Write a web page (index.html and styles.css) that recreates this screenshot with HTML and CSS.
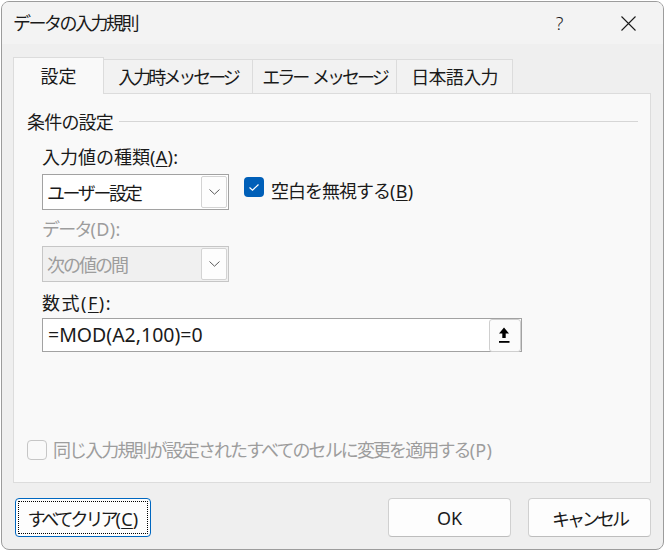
FILE: index.html
```html
<!DOCTYPE html>
<html>
<head>
    <meta charset="utf-8">
    <title>データの入力規則</title>
    <link rel="stylesheet" href="styles.css">
</head>
<body>
    <div class="dialog">
        <div class="titlebar">
            <span class="title">データの入力規則</span>
            <div class="caption-btn help">?</div>
            <div class="caption-btn">
                <svg width="15" height="15" viewBox="0 0 15 15"><path d="M0.5 0.5 L14.5 14.5 M14.5 0.5 L0.5 14.5" stroke="#1a1a1a" stroke-width="1.1" fill="none"/></svg>
            </div>
        </div>

        <div class="content">
            <div class="tabs">
                <div class="tab active">設定</div>
                <div class="tab t-msg">入力時メッセージ</div>
                <div class="tab t-err">エラー メッセージ</div>
                <div class="tab t-ime">日本語入力</div>
            </div>

            <div class="panel">
                <div class="group-title">
                    <span>条件の設定</span>
                    <div class="rule"></div>
                </div>

                <div class="form">
                    <div class="label lbl-type">入力値の種類<span class="key">(<u>A</u>):</span></div>
                    <div class="row">
                        <div class="combo">
                            <span class="combo-text t-user">ユーザー設定</span>
                            <div class="drop-btn">
                                <svg width="11" height="6" viewBox="0 0 11 6"><path d="M0.5 0.5 L5.5 5.2 L10.5 0.5" stroke="#5a5a5a" stroke-width="1" fill="none"/></svg>
                            </div>
                        </div>
                        <div class="check blank">
                            <span class="box checked">
                                <svg width="20" height="20" viewBox="0 0 20 20"><path d="M5.5 10.5 L8.5 13.2 L14.5 7.5" stroke="#fff" stroke-width="1.2" fill="none"/></svg>
                            </span>
                            <span class="check-text">空白を無視する<span class="key">(<u>B</u>)</span></span>
                        </div>
                    </div>

                    <div class="label disabled lbl-data">データ<span class="key">(D):</span></div>
                    <div class="combo disabled">
                        <span class="combo-text t-between">次の値の間</span>
                        <div class="drop-btn">
                            <svg width="11" height="6" viewBox="0 0 11 6"><path d="M0.5 0.5 L5.5 5.2 L10.5 0.5" stroke="#5a5a5a" stroke-width="1" fill="none"/></svg>
                        </div>
                    </div>

                    <div class="label lbl-formula">数式<span class="key">(<u>F</u>):</span></div>
                    <div class="formula">
                        <span class="formula-text">=MOD(A2,100)=0</span>
                        <div class="ref-btn">
                            <svg width="12" height="17" viewBox="0 0 12 17"><path d="M6 0.5 L11 6.5 L7.7 6.5 L7.7 11 L4.3 11 L4.3 6.5 L1 6.5 Z" fill="#000"/><rect x="1" y="14" width="10.5" height="1.8" fill="#000"/></svg>
                        </div>
                    </div>
                </div>

                <div class="check apply disabled">
                    <span class="box"></span>
                    <span class="check-text">同じ入力規則が設定されたすべてのセルに変更を適用する<span class="key">(P)</span></span>
                </div>
            </div>

            <div class="footer">
                <button class="btn clear">すべてクリア<span class="key">(<u>C</u>)</span></button>
                <div class="spacer"></div>
                <button class="btn">OK</button>
                <button class="btn cancel">キャンセル</button>
            </div>
        </div>
    </div>
</body>
</html>
```

FILE: styles.css
```css
* {
    box-sizing: border-box;
}
body {
    margin: 0;
    background: #fff;
    font-family: "Noto Sans", "Noto Sans CJK JP", sans-serif;
    font-size: 18px;
    color: #1a1a1a;
}
u {
    text-decoration-thickness: 1px;
    text-underline-offset: 2px;
}
/* mnemonic "(X)" parts keep normal spacing */
.key {
    letter-spacing: 0.3px;
}
.dialog {
    margin: 1px 0 0 1px;
    width: 663px;
    height: 549px;
    border: 1px solid #9c9c9c;
    border-radius: 8px;
    background: #efefef;
    overflow: hidden;
    display: flex;
    flex-direction: column;
}

/* title bar */
.titlebar {
    height: 42px;
    background: #f3f3f3;
    display: flex;
    align-items: center;
    padding-left: 11px;
}
.title {
    flex: 1;
    line-height: 24px;
    letter-spacing: -2.5px;
}
.caption-btn {
    width: 69px;
    height: 42px;
    display: flex;
    align-items: center;
    justify-content: center;
}
.help {
    font-weight: 300;
}

.content {
    padding: 13px 12px 0 11px;
}

/* tabs */
.tabs {
    display: flex;
    align-items: flex-end;
    margin-bottom: -1px;
    position: relative;
    z-index: 1;
}
.tab {
    height: 34px;
    margin-bottom: 1px;
    margin-left: -1px;
    border: 1px solid #dcdcdc;
    border-bottom: none;
    background: #f2f2f2;
    display: flex;
    align-items: center;
    justify-content: center;
    line-height: 24px;
    white-space: nowrap;
}
.tab.active {
    height: 37px;
    margin-bottom: 0;
    margin-left: 0;
    width: 91px;
    background: #f9f9f9;
    position: relative;
    z-index: 2;
}
.t-msg {
    width: 150px;
    letter-spacing: -3px;
}
.t-err {
    width: 145px;
    letter-spacing: -3px;
    word-spacing: 3px;
}
.t-ime {
    width: 117px;
    letter-spacing: -0.7px;
}

/* panel */
.panel {
    height: 390px;
    background: #f9f9f9;
    border: 1px solid #dcdcdc;
    padding: 16px 12px 20px 13px;
    display: flex;
    flex-direction: column;
}
.group-title {
    display: flex;
    line-height: 24px;
    letter-spacing: -0.8px;
}
.rule {
    flex: 1;
    height: 1px;
    margin: 11px 0 0 6px;
    background: #d6d6d6;
}
.form {
    margin-left: 15px;
}
.label {
    line-height: 24px;
}
.lbl-type {
    margin-top: 11px;
}
.lbl-data {
    margin-top: 7px;
    letter-spacing: -1.8px;
}
.lbl-formula {
    margin-top: 9px;
    letter-spacing: 1.5px;
}
.lbl-formula .key {
    letter-spacing: 1.5px;
}
.disabled {
    color: #9d9d9d;
}
.row {
    display: flex;
    align-items: flex-start;
    margin-top: 5px;
}
.combo {
    width: 187px;
    height: 36px;
    border: 1px solid #a2a2a2;
    background: #fff;
    display: flex;
    align-items: center;
    padding-left: 4px;
}
.combo.disabled {
    margin-top: 5px;
    border-color: #c6c6c6;
    background: #f0f0f0;
}
.combo-text {
    flex: 1;
    line-height: 24px;
    padding-top: 1px;
}
.t-user {
    letter-spacing: -2.4px;
}
.t-between {
    letter-spacing: -2px;
}
.drop-btn {
    width: 26px;
    height: 32px;
    margin-right: 1px;
    border: 1px solid #d3d3d3;
    border-radius: 2px;
    background: #fdfdfd;
    display: flex;
    align-items: center;
    justify-content: center;
}

/* checkboxes */
.check {
    display: flex;
    align-items: flex-start;
}
.check.blank {
    margin-left: 15px;
}
.box {
    width: 20px;
    height: 20px;
    border: 1px solid #c6c6c6;
    border-radius: 4px;
    background: #f9f9f9;
    margin-top: 3px;
    display: block;
}
.box.checked {
    border: none;
    background: #005fb8;
}
.box svg {
    display: block;
}
.check-text {
    line-height: 24px;
    margin: 5px 0 0 7px;
    letter-spacing: -1px;
}
.check.apply {
    margin-top: auto;
    align-items: center;
}
.check.apply .box {
    margin-top: 0;
}
.check.apply .check-text {
    margin: 0 0 0 6px;
    letter-spacing: -1.9px;
}

/* formula box */
.formula {
    margin-top: 3px;
    width: 480px;
    height: 34px;
    border: 1px solid #a2a2a2;
    background: #fff;
    display: flex;
    align-items: center;
    padding-left: 5px;
}
.formula-text {
    flex: 1;
    font-size: 19.5px;
    line-height: 24px;
}
.ref-btn {
    width: 32px;
    height: 33px;
    align-self: flex-start;
    border: 1px solid #cfcfcf;
    border-radius: 3px;
    background: #fbfbfb;
    display: flex;
    align-items: center;
    justify-content: center;
    padding-right: 3px;
}

/* buttons */
.footer {
    display: flex;
    margin-top: 15px;
}
.spacer {
    flex: 1;
}
.btn {
    height: 39px;
    width: 123px;
    margin-left: 17px;
    font: inherit;
    color: #1a1a1a;
    background: #fdfdfd;
    border: 1px solid #d0d0d0;
    border-bottom-color: #bdbdbd;
    border-radius: 4px;
    padding: 0;
}
.btn.clear {
    width: 136px;
    margin-left: 2px;
    border: 1px solid #0067c0;
    outline: 1px dotted #000;
    outline-offset: -4px;
    letter-spacing: -3px;
}
.btn.cancel {
    letter-spacing: -3px;
}
```
